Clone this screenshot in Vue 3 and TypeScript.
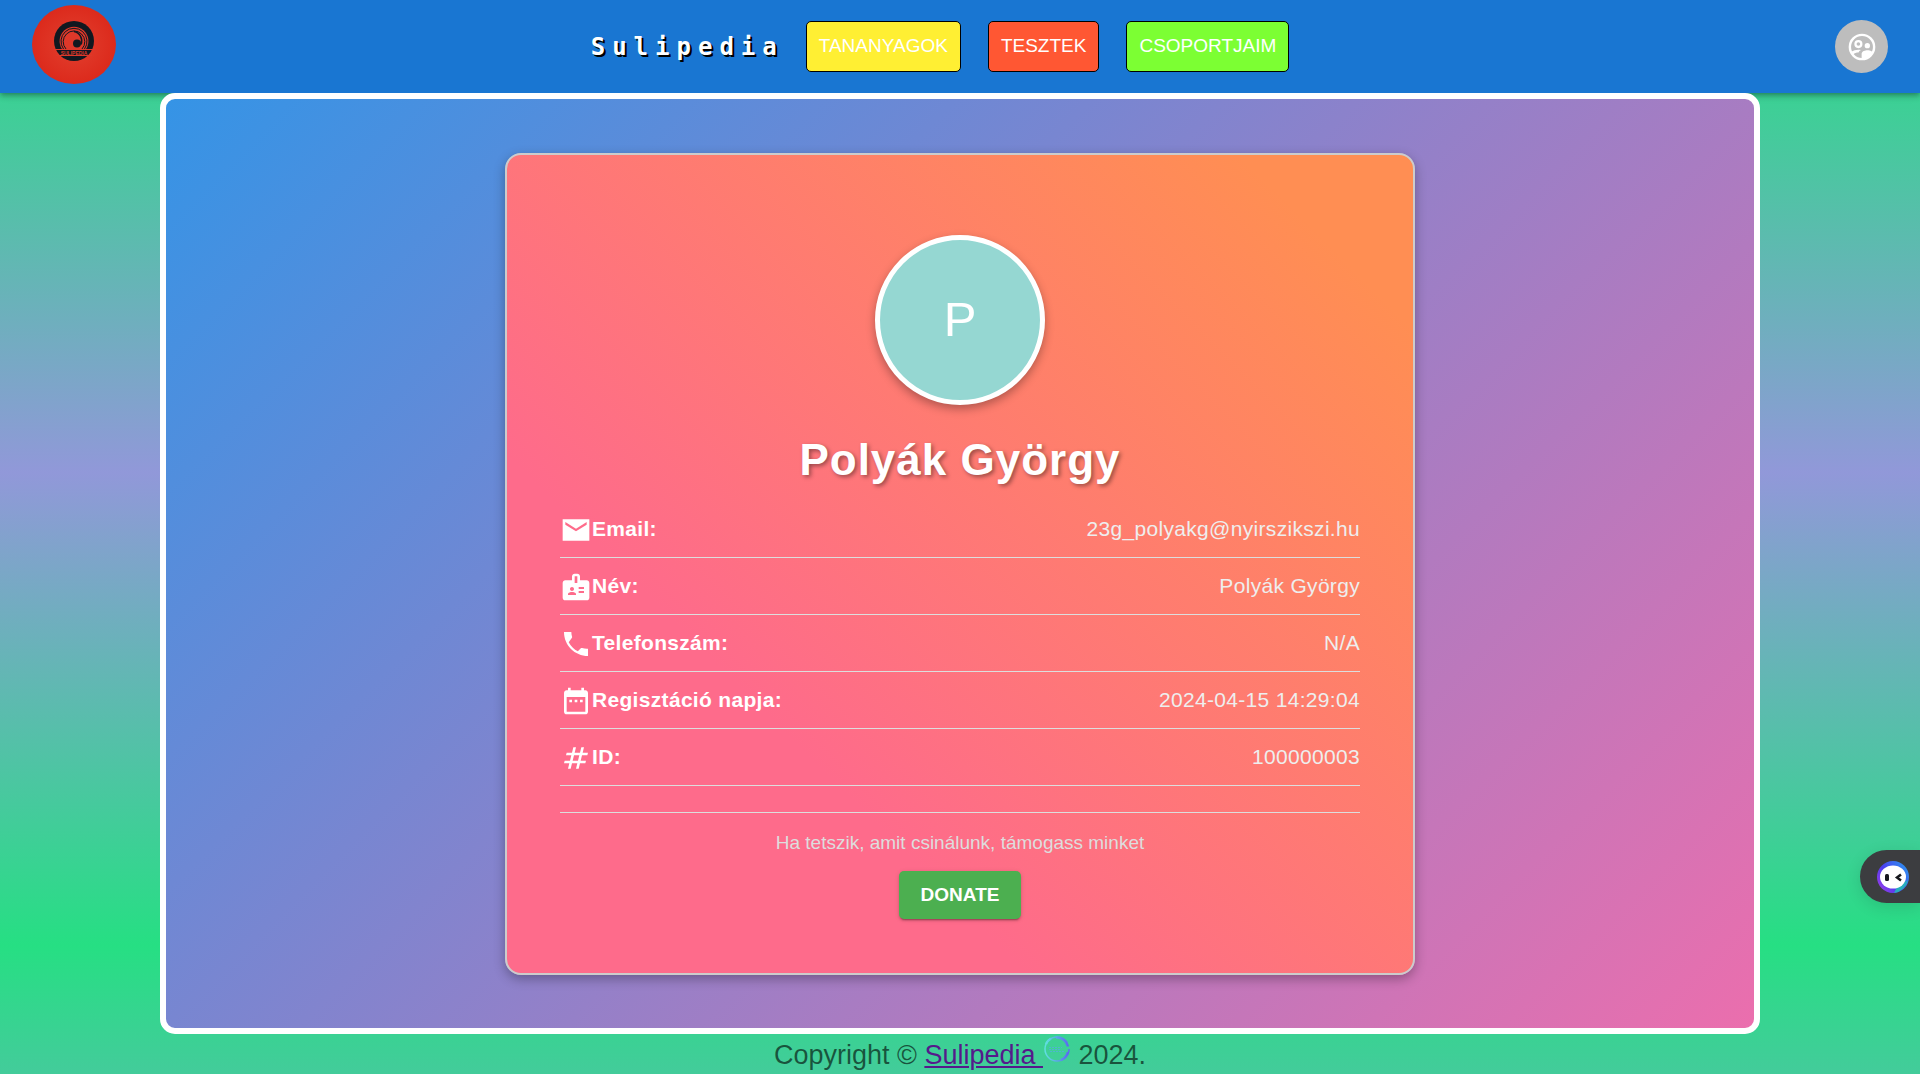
<script setup lang="ts">
interface NavItem {
  label: string
  tone: string
}

interface ProfileRow {
  label: string
  value: string
  icon: string
}

const navItems: NavItem[] = [
  { label: 'TANANYAGOK', tone: 'yellow' },
  { label: 'TESZTEK', tone: 'red' },
  { label: 'CSOPORTJAIM', tone: 'green' },
]

const fullName = 'Polyák György'

const rows: ProfileRow[] = [
  {
    label: 'Email:',
    value: '23g_polyakg@nyirszikszi.hu',
    icon: 'M22 4H2v16h20V4zm-2 4l-8 5-8-5V6l8 5 8-5v2z',
  },
  {
    label: 'Név:',
    value: fullName,
    icon: 'M20 7h-5V4c0-1.1-.9-2-2-2h-2c-1.1 0-2 .9-2 2v3H4c-1.1 0-2 .9-2 2v11c0 1.1.9 2 2 2h16c1.1 0 2-.9 2-2V9c0-1.1-.9-2-2-2zM9 12c.83 0 1.5.67 1.5 1.5S9.83 15 9 15s-1.5-.67-1.5-1.5S8.17 12 9 12zm3 6H6v-.75c0-1 2-1.5 3-1.5s3 .5 3 1.5V18zm1-9h-2V4h2v5zm5 7.5h-4V15h4v1.5zm0-3h-4V12h4v1.5z',
  },
  {
    label: 'Telefonszám:',
    value: 'N/A',
    icon: 'M6.54 10.6C8 13.4 10.6 16 13.4 17.46l2.2-2.2c.28-.28.68-.36 1.02-.24 1.12.37 2.33.57 3.57.57L21 15.6V21C11.06 21 3 12.94 3 3h5.5c0 1.25.2 2.45.57 3.57.11.35.03.74-.25 1.02z',
  },
  {
    label: 'Regisztáció napja:',
    value: '2024-04-15 14:29:04',
    icon: 'M9 11H7v2h2v-2zm4 0h-2v2h2v-2zm4 0h-2v2h2v-2zm2-7h-1V2h-2v2H8V2H6v2H5c-1.11 0-1.99.9-1.99 2L3 20c0 1.1.89 2 2 2h14c1.1 0 2-.9 2-2V6c0-1.1-.9-2-2-2zm0 16H5V9h14v11z',
  },
  {
    label: 'ID:',
    value: '100000003',
    icon: 'M20.5 10L21 8h-4l1-4h-2l-1 4h-4l1-4h-2L9 8H5l-.5 2h4l-1 4h-4L3 16h4l-1 4h2l1-4h4l-1 4h2l1-4h4l.5-2h-4l1-4h4zm-7 4h-4l1-4h4l-1 4z',
  },
]
</script>

<template>
  <div class="page">
    <header class="topbar">
      <a class="logo" href="#" aria-label="Sulipedia">
        <svg viewBox="0 0 84 79" width="84" height="79" aria-hidden="true">
          <defs>
            <radialGradient id="logoRed">
              <stop offset="0" stop-color="#e2402f" />
              <stop offset="1" stop-color="#dc2a1c" />
            </radialGradient>
          </defs>
          <ellipse cx="42" cy="39.5" rx="42" ry="39.5" fill="url(#logoRed)" />
          <circle cx="42" cy="36" r="20" fill="#111820" />
          <path d="M30 44a14.400 14.400 0 1 1 24 0z" fill="#de382a" />
          <path d="M31.500 44a13 13 0 1 1 21 0M34 44a10.800 10.800 0 1 1 16 0" fill="none" stroke="#111820" />
          <path d="M42 26.500a9.500 9.500 0 0 1 7 13" fill="none" stroke="#111820" stroke-width="1.500" />
          <circle cx="45" cy="38.500" r="4" fill="#111820" />
          <path d="M22 44.500h40M24 50.500h36" stroke="#de382a" />
          <text x="42" y="49.500" text-anchor="middle" class="logo-text">SULIPEDIA</text>
        </svg>
      </a>

      <nav class="nav">
        <a class="brand" href="#">Sulipedia</a>
        <button
          v-for="item in navItems"
          :key="item.label"
          type="button"
          class="nav-button"
          :class="item.tone"
        >
          {{ item.label }}
        </button>
      </nav>

      <button class="account" type="button" aria-label="Fiók">
        <svg viewBox="0 0 24 24" width="32" height="32" aria-hidden="true">
          <circle cx="12" cy="12" r="9.1" fill="none" stroke="#fff" stroke-width="1.800" />
          <circle cx="9.300" cy="9.800" r="2.200" fill="none" stroke="#fff" stroke-width="1.700" />
          <circle cx="16" cy="11" r="2" fill="#fff" />
          <path
            d="M4 15.600c1.400-1 3.400-1.500 5.300-1.500.7 0 1.300.1 1.900.2-.9.500-1.500 1.100-1.800 1.800-1.600 0-3 .5-3.900 1.300z"
            fill="#fff"
          />
          <path d="M11.700 21.500v-4.300c0-1.900 2.800-2.700 4.300-2.700 1 0 2.500.3 3.700 1l.8.500c-1.500 3.300-4.800 5.500-8.800 5.500z" fill="#fff" />
        </svg>
      </button>
    </header>

    <main class="stage">
      <section class="card">
        <div class="avatar">P</div>
        <h1 class="name">{{ fullName }}</h1>

        <dl class="details">
          <div v-for="row in rows" :key="row.label" class="detail">
            <dt>
              <svg viewBox="0 0 24 24" width="32" height="32" aria-hidden="true">
                <path :d="row.icon" fill="#fff" />
              </svg>
              {{ row.label }}
            </dt>
            <dd>{{ row.value }}</dd>
          </div>
        </dl>

        <div class="support">
          <p>Ha tetszik, amit csinálunk, támogass minket</p>
          <button class="donate" type="button">DONATE</button>
        </div>
      </section>
    </main>

    <footer class="footer">
      <span>Copyright © </span>
      <a href="#">Sulipedia </a>
      <svg class="seal" viewBox="0 0 26 26" width="26" height="26" aria-hidden="true">
        <defs>
          <linearGradient id="sealRing">
            <stop offset="0" stop-color="#5fe0e0" />
            <stop offset="1" stop-color="#5a6cf0" />
          </linearGradient>
        </defs>
        <g fill="none" stroke="url(#sealRing)">
          <circle cx="13" cy="13" r="12" stroke-width="1.500" stroke-dasharray="68 8" />
          <path d="M12 1.500a11.500 11.500 0 0 1 12 9M24 16a12 12 0 0 1-7 8M2 8a12 12 0 0 1 5-5.500" stroke-width="2.500" />
        </g>
        <path d="M5 11.500h13M5 13.500h11M6 15.500h15" stroke="#4fb4d0" stroke-dasharray="2 1" />
      </svg>
      <span> 2024.</span>
    </footer>

    <button class="assistant" type="button" aria-label="Asszisztens">
      <svg viewBox="0 0 32 32" width="32" height="32" aria-hidden="true">
        <defs>
          <linearGradient id="botRing" x1="0" y1="1" x2="1" y2="0.300">
            <stop offset="0" stop-color="#a93be8" />
            <stop offset="0.500" stop-color="#4a3df0" />
            <stop offset="1" stop-color="#2f8df0" />
          </linearGradient>
        </defs>
        <circle cx="16" cy="16" r="16" fill="url(#botRing)" />
        <path d="M31 19a16 16 0 0 1-14 13l3-6z" fill="#27aebd" />
        <ellipse cx="16" cy="16" rx="13" ry="11.500" fill="#fff" />
        <rect x="8" y="13" width="4" height="7" rx="1.500" fill="#16181d" />
        <path d="M24 13.500l-4 3 4 3" fill="none" stroke="#16181d" stroke-width="2.500" />
      </svg>
    </button>
  </div>
</template>

<style>
body {
  margin: 0;
  background: linear-gradient(#26df83, #9198d9, #26df83);
  background-size: 100% 88vh;
}
</style>

<style scoped>
.page {
  font-family: 'Liberation Sans', Arial, sans-serif;
  color: #fff;
}

.topbar {
  display: flex;
  align-items: center;
  box-sizing: border-box;
  height: 93px;
  padding: 0 32px;
  background: #1976d2;
  box-shadow:
    0 2px 4px -1px rgba(0, 0, 0, 0.2),
    0 4px 5px rgba(0, 0, 0, 0.14),
    0 1px 10px rgba(0, 0, 0, 0.12);
}

.logo {
  padding-bottom: 4px;
}

.logo-text {
  fill: #de382a;
  font-size: 5px;
  font-weight: 700;
}

.logo svg,
.account svg,
.assistant svg,
.detail svg {
  display: block;
}

.nav {
  display: flex;
  flex: 1;
  align-items: center;
  justify-content: center;
  gap: 27px;
  padding-right: 71px;
}

.brand {
  margin-right: -5px;
  color: #fff;
  font: 700 24px/32px 'DejaVu Sans Mono', monospace;
  letter-spacing: 7px;
  text-decoration: none;
  text-shadow: 2px 2px #000;
}

.nav-button {
  padding: 11px 12px 12px;
  border: 1px solid #000;
  border-radius: 5px;
  color: #fff;
  font: 19px/26px 'Liberation Sans', Arial, sans-serif;
  cursor: pointer;
}

.yellow {
  background: #ffef33;
}

.red {
  background: #ff5733;
}

.green {
  background: #7cff33;
}

.account {
  display: flex;
  align-items: center;
  justify-content: center;
  width: 53px;
  height: 53px;
  padding: 0;
  border: 0;
  border-radius: 50%;
  background: #bdbdbd;
}

.stage {
  box-sizing: border-box;
  max-width: 1600px;
  margin: 0 auto;
  padding: 54px 16px 53px;
  border: 6px solid #fff;
  border-radius: 15px;
  background: linear-gradient(135deg, #3494e6, #ec6ead);
  background-origin: border-box;
}

.card {
  display: flex;
  flex-direction: column;
  align-items: center;
  box-sizing: border-box;
  max-width: 910px;
  margin: 0 auto;
  padding: 80px 53px 54px;
  border: 2px solid #ccc;
  border-radius: 16px;
  background: linear-gradient(45deg, #fe6b8b 30%, #ff8e53 90%);
  box-shadow: 0 4px 12px rgba(0, 0, 0, 0.3);
}

.avatar {
  display: flex;
  align-items: center;
  justify-content: center;
  box-sizing: border-box;
  width: 170px;
  height: 170px;
  padding-bottom: 2px;
  border: 5px solid #fff;
  border-radius: 50%;
  background: #95d7d2;
  box-shadow: 0 4px 10px rgba(0, 0, 0, 0.3);
  font-size: 49px;
  line-height: 52px;
}

.name {
  margin: 29px 0 15px;
  font-size: 44px;
  line-height: 52px;
  letter-spacing: 1px;
  text-shadow: 2px 2px 4px rgba(0, 0, 0, 0.4);
}

.details {
  align-self: stretch;
  margin: 0;
}

.detail {
  display: flex;
  justify-content: space-between;
  padding: 12px 0 11px;
  border-bottom: 1px solid #ddd;
  font-size: 21px;
  line-height: 32px;
  letter-spacing: 0.015em;
}

.detail svg {
  margin-top: 1px;
}

.detail dt {
  display: flex;
  font-weight: 700;
}

.detail dd {
  margin: 0;
  color: #eee;
}

.support {
  display: flex;
  flex-direction: column;
  align-items: center;
  align-self: stretch;
  gap: 12px;
  margin-top: 26px;
  padding-top: 14px;
  border-top: 1px solid #ddd;
}

.support p {
  margin: 0;
  color: #ddd;
  font-size: 19px;
  line-height: 32px;
}

.donate {
  height: 48px;
  padding: 0 22px 1px;
  border: 0;
  border-radius: 5px;
  background: #4caf50;
  box-shadow:
    0 3px 1px -2px rgba(0, 0, 0, 0.2),
    0 2px 2px rgba(0, 0, 0, 0.14),
    0 1px 5px rgba(0, 0, 0, 0.12);
  color: #fff;
  font: 700 19px/32px 'Liberation Sans', Arial, sans-serif;
}

.footer {
  display: flex;
  justify-content: center;
  padding-top: 2px;
  color: rgba(0, 0, 0, 0.6);
  font-size: 27px;
  line-height: 38px;
  white-space: pre;
}

.footer a {
  color: #551a8b;
}

.seal {
  margin: 0 1px;
}

.assistant {
  position: fixed;
  top: 850px;
  right: 0;
  width: 60px;
  height: 53px;
  padding: 0 11px 0 17px;
  border: 0;
  border-radius: 27px 0 0 27px;
  background: #3c3d40;
  box-shadow: 0 4px 16px rgba(0, 0, 0, 0.12);
}
</style>
